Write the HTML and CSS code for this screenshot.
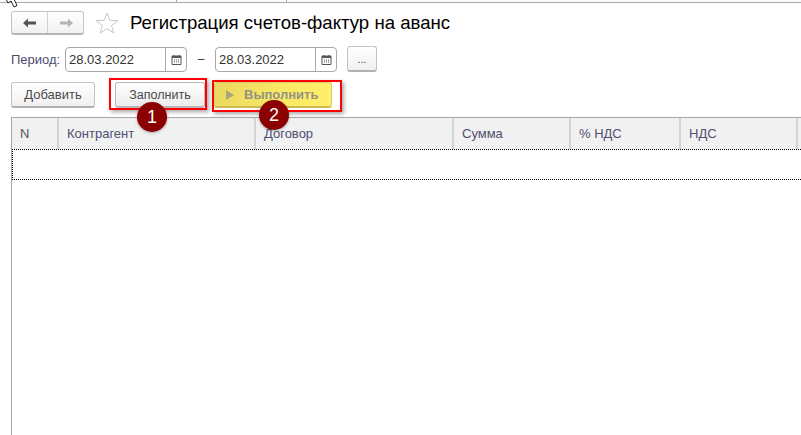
FILE: index.html
```html
<!DOCTYPE html>
<html lang="ru">
<head>
<meta charset="utf-8">
<title>Регистрация счетов-фактур на аванс</title>
<link rel="stylesheet" href="styles.css">
</head>
<body>
<div class="topstrip"><i class="tick tick-a"></i><i class="tick tick-b"></i></div>
<svg class="cursor" width="14" height="9" viewBox="0 0 14 9"><path d="M0 -1 L2 3 L5 1 L8 7 L11 5.500 L8 -1" fill="#fff" stroke="#222" stroke-width="1"/></svg>
<div class="page">
  <div class="titlebar">
    <div class="nav">
      <button class="navbtn"><svg width="16" height="12" viewBox="0 0 16 12"><path d="M1 6 L6 1.500 V4.500 H14 V7.500 H6 V10.500 Z" fill="#555"/></svg></button>
      <button class="navbtn"><svg width="16" height="12" viewBox="0 0 16 12"><path d="M15 6 L10 1.500 V4.500 H2 V7.500 H10 V10.500 Z" fill="#b4b4b4"/></svg></button>
    </div>
    <svg class="star" width="24" height="22" viewBox="0 0 24 22"><path d="M12 1 L14.800 8.300 L23 8.600 L16.500 13.400 L18.900 21 L12 16.600 L5.100 21 L7.500 13.400 L1 8.600 L9.200 8.300 Z" fill="#fff" stroke="#c8c8c8" stroke-width="1"/></svg>
    <h1 class="title">Регистрация счетов-фактур на аванс</h1>
  </div>
  <div class="period">
    <span class="period-label">Период:</span>
    <div class="datefield">
      <span class="date">28.03.2022</span>
      <span class="cal"><svg width="11" height="11" viewBox="0 0 11 11"><path d="M1 2 H10 V10.500 H1 Z M3 1 V2 M8 1 V2" fill="none" stroke="#555"/><path d="M1 2 H10 V4 H1 Z" fill="#555"/><path d="M3 5.500 H4 V6.500 H3 Z M5 5.500 H6 V6.500 H5 Z M7 5.500 H8 V6.500 H7 Z M3 7.500 H4 V8.500 H3 Z M5 7.500 H6 V8.500 H5 Z M7 7.500 H8 V8.500 H7 Z" fill="#555"/></svg></span>
    </div>
    <span class="dash">–</span>
    <div class="datefield">
      <span class="date">28.03.2022</span>
      <span class="cal"><svg width="11" height="11" viewBox="0 0 11 11"><path d="M1 2 H10 V10.500 H1 Z M3 1 V2 M8 1 V2" fill="none" stroke="#555"/><path d="M1 2 H10 V4 H1 Z" fill="#555"/><path d="M3 5.500 H4 V6.500 H3 Z M5 5.500 H6 V6.500 H5 Z M7 5.500 H8 V6.500 H7 Z M3 7.500 H4 V8.500 H3 Z M5 7.500 H6 V8.500 H5 Z M7 7.500 H8 V8.500 H7 Z" fill="#555"/></svg></span>
    </div>
    <button class="btn btn-more">...</button>
  </div>
  <div class="actions">
    <button class="btn btn-add">Добавить</button>
    <div class="marked marked-fill">
      <button class="btn btn-fill">Заполнить</button>
      <span class="redbox redbox-fill"></span>
      <span class="badge badge-fill">1</span>
    </div>
    <div class="marked marked-run">
      <button class="btn btn-run"><svg width="10" height="10" viewBox="0 0 10 10"><path d="M1 0 L9 5 L1 10 Z" fill="#a6a67a"/></svg>Выполнить</button>
      <span class="redbox redbox-run"></span>
      <span class="badge badge-run">2</span>
    </div>
  </div>
  <div class="table">
    <div class="thead">
      <div class="th c-n">N</div>
      <div class="th c-k">Контрагент</div>
      <div class="th c-d">Договор</div>
      <div class="th c-s">Сумма</div>
      <div class="th c-p">% НДС</div>
      <div class="th c-v">НДС</div>
      <div class="th c-r"></div>
    </div>
    <div class="row"></div>
  </div>
</div>
</body>
</html>
```
FILE: styles.css
```css
* { box-sizing: border-box; }
html, body { margin: 0; height: 100%; overflow: hidden; background: #fff; }
body { font-family: "Liberation Sans", Arial, sans-serif; position: relative; }
button { font-family: inherit; margin: 0; padding: 0; }

.topstrip { height: 3px; border-bottom: 1px solid #a9a9a9; position: relative; background: #fbfbfb; }
.tick { position: absolute; top: 0; width: 1px; height: 2px; background: #a9a9a9; }
.tick-a { left: 176px; }
.tick-b { left: 286px; }
.cursor { position: absolute; left: 6px; top: 0; }

.page { padding: 8px 0 0 11px; }

.titlebar { display: flex; align-items: center; height: 24px; }
.nav { display: flex; width: 73px; height: 24px; border: 1px solid #c4c4c4; border-bottom: 2px solid #b5b5b5; border-radius: 3px; background: linear-gradient(#fff, #f1f1f1); }
.navbtn { flex: 1; border: 0; background: none; display: flex; align-items: center; justify-content: center; }
.navbtn + .navbtn { border-left: 1px solid #cfcfcf; }
.star { margin-left: 11px; }
.title { margin: 0 0 0 11px; font-size: 18.6px; font-weight: 400; color: #000; line-height: 24px; white-space: nowrap; }

.period { display: flex; align-items: center; height: 26px; margin-top: 11px; }
.period-label { width: 54px; font-size: 13px; color: #4c4c70; }
.datefield { display: flex; width: 122px; height: 25px; border: 1px solid #a8a8a8; border-radius: 4px; background: #fff; }
.date { flex: 1; padding-left: 3px; font-size: 13px; line-height: 23px; color: #333; }
.cal { width: 21px; border-left: 1px solid #a8a8a8; display: flex; align-items: center; justify-content: center; }
.dash { width: 28px; text-align: center; font-size: 12px; color: #333; }

.btn { height: 26px; border: 1px solid #c4c4c4; border-bottom: 2px solid #b0b0b0; border-radius: 3px; background: linear-gradient(#fff, #f0f0f0); font-size: 13px; color: #4a4a4a; }
.btn-more { width: 30px; margin-left: 10px; font-size: 11px; }

.actions { display: flex; margin-top: 10px; height: 26px; }
.btn-add { width: 84px; }
.marked { position: relative; }
.marked-fill { margin-left: 20px; }
.marked-run { margin-left: 9px; }
.btn-fill { width: 90px; font-size: 12.5px; background: linear-gradient(#fff, #ececec); border-color: #b8b8b8; }
.btn-run { width: 118px; display: flex; align-items: center; padding-left: 10px; gap: 9px; font-size: 13px; font-weight: 700; color: #939385; background: linear-gradient(100deg, #e9d860, #fbe964 60%, #ffef6a); border-color: #d8cc70; border-bottom-color: #cdbb50; }
.redbox { position: absolute; border: 2px solid #f00; box-shadow: 2px 2px 4px rgba(0,0,0,.35); pointer-events: none; }
.redbox-fill { left: -6px; top: -4px; width: 98px; height: 32px; }
.redbox-run { left: -2px; top: -2px; width: 130px; height: 32px; }
.badge { position: absolute; width: 30px; height: 30px; border-radius: 50%; background: #8b0000; color: #fff; font-size: 18px; line-height: 30px; text-align: center; box-shadow: 0 1px 3px rgba(0,0,0,.3); }
.badge-fill { left: 22px; top: 20px; }
.badge-run { left: 45px; top: 18px; }

.table { margin-top: 9px; border-top: 1px solid #a6a6a6; border-left: 1px solid #a6a6a6; height: 320px; }
.thead { display: flex; height: 31px; background: #f1f1f1; }
.th { flex: none; border-right: 2px solid #d4d4d4; padding: 8px 0 0 8px; font-size: 13px; color: #4f4f70; line-height: 15px; white-space: nowrap; }
.c-n { width: 47px; color: #555; }
.c-k { width: 197px; }
.c-d { width: 198px; }
.c-s { width: 117px; }
.c-p { width: 110px; }
.c-v { width: 117px; }
.c-r { flex: 1; border-right: 0; }
.row { height: 31px; border-top: 1px dotted #000; border-bottom: 1px dotted #000; border-left: 1px dotted #000; }
```
